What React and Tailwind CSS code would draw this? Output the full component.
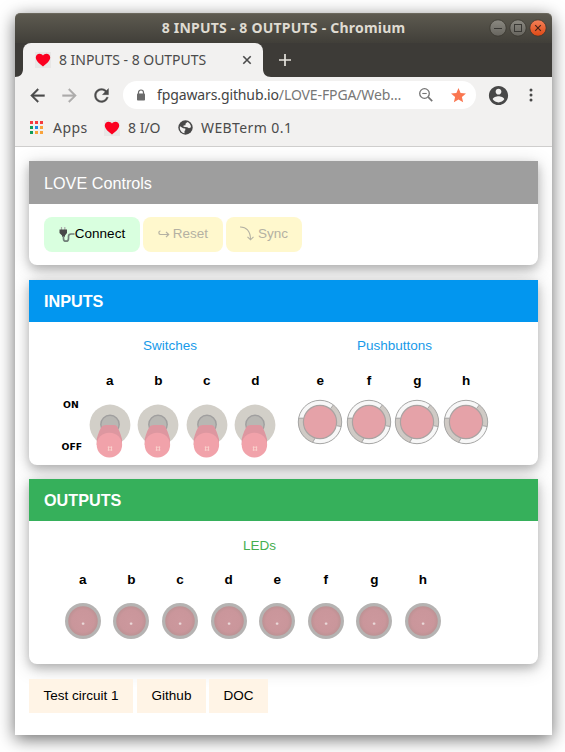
import React from "react";

const LETTERS = ["a", "b", "c", "d", "e", "f", "g", "h"];

function Heart() {
  return (
    <span className="block w-4 h-4 bg-[#e8e7e6] shrink-0">
      <svg viewBox="0 0 16 16" className="block w-4 h-4">
        <path d="M8 14.5C5 12 .8 9.3.8 5.6.8 3.3 2.5 1.7 4.6 1.7c1.4 0 2.700.7 3.4 1.900.700-1.200 2-1.900 3.400-1.900 2.100 0 3.800 1.600 3.800 3.900 0 3.700-4.200 6.400-7.200 8.900z" fill="#fb0020" />
      </svg>
    </span>
  );
}

function TitleBar() {
  return (
    <div className="relative h-[30px] shrink-0 rounded-t-[5px] bg-linear-to-b from-[#5d5a50] to-[#413f39] border-t border-[#6b685d]">
      <div className="pt-[4px] text-center text-[14px] leading-[20px] font-bold text-[#dfdbd2] font-['Noto_Sans',sans-serif] whitespace-nowrap">
        <span className="tracking-[0.22px]">8 INPUTS - 8 OUTPUTS - Chromium</span>
      </div>
      <svg className="absolute right-[5px] top-[5px]" width="58" height="18" viewBox="0 0 58 18">
        <defs>
          <linearGradient id="grey" x1="0" y1="0" x2="0" y2="1">
            <stop offset="0" stopColor="#8b8981" />
            <stop offset="1" stopColor="#66645e" />
          </linearGradient>
          <linearGradient id="orange" x1="0" y1="0" x2="0" y2="1">
            <stop offset="0" stopColor="#f58159" />
            <stop offset="1" stopColor="#dd4814" />
          </linearGradient>
        </defs>
        <circle cx="9" cy="9" r="8.200" fill="url(#grey)" stroke="#38362f" strokeWidth=".8" />
        <path d="M5 9.500h8" stroke="#3a3935" />
        <circle cx="29" cy="9" r="8.200" fill="url(#grey)" stroke="#38362f" strokeWidth=".8" />
        <rect x="25.500" y="5.500" width="7" height="7" fill="none" stroke="#3a3935" />
        <circle cx="49" cy="9" r="8.200" fill="url(#orange)" stroke="#38362f" strokeWidth=".8" />
        <path d="M46.200 6.200l5.600 5.600M51.800 6.200l-5.600 5.600" stroke="#4a2418" strokeWidth="1.200" />
      </svg>
    </div>
  );
}

function TabBar() {
  return (
    <div className="flex h-[34px] shrink-0 bg-[#3d3b37]">
      <svg width="8" height="34" className="shrink-0">
        <path d="M8 26v8H0c5 0 8-3 8-8z" fill="#f2f1f0" />
      </svg>
      <div className="flex items-center w-[240px] rounded-t-[8px] bg-[#f2f1f0] pl-3 pr-[11px]">
        <Heart />
        <span className="ml-2 w-[160px] -mt-[2px] whitespace-nowrap text-[14px] tracking-[-0.03px] text-[#4b4b4b] font-['Noto_Sans',sans-serif]">8 INPUTS - 8 OUTPUTS</span>
        <svg className="ml-auto" width="10" height="10" viewBox="0 0 10 10">
          <path d="M1.300 1.300l7.400 7.400M8.700 1.300L1.300 8.700" stroke="#4b4b4b" strokeWidth="1.600" />
        </svg>
      </div>
      <svg width="8" height="34" className="shrink-0">
        <path d="M0 26v8h8c-5 0-8-3-8-8z" fill="#f2f1f0" />
      </svg>
      <svg className="ml-2 mt-[11px]" width="12" height="12" viewBox="0 0 12 12">
        <path d="M6 0v12M0 6h12" stroke="#e6e4dd" strokeWidth="1.700" />
      </svg>
    </div>
  );
}

function Toolbar() {
  return (
    <div className="flex items-center h-9 shrink-0 pl-[11.5px] bg-[#f2f1f0]">
      <svg className="shrink-0" width="21" height="21" viewBox="0 0 24 24" fill="#4b4b4b" stroke="#4b4b4b" strokeWidth=".4">
        <path d="M20 11H7.830l5.590-5.590L12 4l-8 8 8 8 1.410-1.410L7.830 13H20v-2z" />
      </svg>
      <svg className="ml-[11px] shrink-0" width="21" height="21" viewBox="0 0 24 24" fill="#adacab" stroke="#adacab" strokeWidth=".4">
        <path d="M12 4l-1.410 1.410L16.170 11H4v2h12.170l-5.580 5.590L12 20l8-8z" />
      </svg>
      <svg className="ml-[11px] shrink-0" width="21" height="21" viewBox="0 0 24 24" fill="#4b4b4b" stroke="#4b4b4b" strokeWidth=".4">
        <path d="M17.650 6.350C16.200 4.900 14.210 4 12 4c-4.420 0-7.990 3.580-7.990 8s3.570 8 7.990 8c3.730 0 6.840-2.550 7.730-6h-2.080c-.82 2.330-3.040 4-5.650 4-3.310 0-6-2.690-6-6s2.690-6 6-6c1.660 0 3.140.69 4.220 1.780L13 11h7V4l-2.350 2.350z" />
      </svg>
      <div className="flex items-center ml-[11.5px] w-[353px] h-7 rounded-full bg-white pl-[13px]">
        <svg width="10" height="12" viewBox="0 0 10 12" className="shrink-0">
          <path d="M2.500 5V3.500a2.500 2.500 0 015 0V5" fill="none" stroke="#6b6b6b" strokeWidth="1.200" />
          <rect x="1" y="4.500" width="8" height="7" rx=".8" fill="#6b6b6b" />
        </svg>
        <span className="ml-[11px] w-[246px] -mt-[1px] whitespace-nowrap text-[14px] tracking-[-0.12px] text-[#777] font-['Noto_Sans',sans-serif]">
          <span className="text-[#444]">fpgawars.github.io</span>/LOVE-FPGA/Web…
        </span>
        <svg className="ml-[15px] shrink-0" width="16" height="16" viewBox="0 0 16 16" fill="none" stroke="#747474" strokeWidth="1.300">
          <circle cx="6.500" cy="6.500" r="4.800" />
          <path d="M10.200 10.200l4 4" strokeWidth="1.700" />
          <path d="M4.300 6.500h4.400" strokeWidth="1.100" />
        </svg>
        <svg className="ml-[16.5px] shrink-0" width="15" height="15" viewBox="2 2 20 20" fill="#fa7650">
          <path d="M12 17.270L18.180 21l-1.640-7.030L22 9.240l-7.190-.61L12 2 9.190 8.630 2 9.240l5.460 4.730L5.820 21z" />
        </svg>
      </div>
      <svg className="ml-[11px] shrink-0" width="23" height="23" viewBox="0 0 24 24" fill="#484848">
        <path d="M12 2C6.480 2 2 6.480 2 12s4.480 10 10 10 10-4.480 10-10S17.520 2 12 2zm0 3c1.660 0 3 1.340 3 3s-1.340 3-3 3-3-1.340-3-3 1.340-3 3-3zm0 14.200c-2.500 0-4.710-1.280-6-3.220.03-1.990 4-3.080 6-3.080 1.990 0 5.970 1.090 6 3.080-1.290 1.940-3.500 3.220-6 3.220z" />
      </svg>
      <svg className="ml-[18.5px] shrink-0" width="4" height="14" viewBox="0 0 4 14" fill="#484848">
        <circle cx="2" cy="2" r="1.500" />
        <circle cx="2" cy="7" r="1.500" />
        <circle cx="2" cy="12" r="1.500" />
      </svg>
    </div>
  );
}

const APP_COLORS = ["#f53b3f", "#f53b3f", "#f53b3f", "#0f9d58", "#1e88e5", "#f9a33c", "#0f9d58", "#f9a33c", "#f9a33c"];

function Bookmarks() {
  return (
    <div className="flex items-center h-[34px] pb-[4px] shrink-0 pl-[15px] bg-[#f2f1f0] border-b border-[#cfcecd] text-[14px] text-[#4b4b4b] font-['Noto_Sans',sans-serif] whitespace-nowrap">
      <svg width="13" height="13" viewBox="0 0 13 13" className="shrink-0">
        {APP_COLORS.map((c, i) => (
          <rect key={i} x={(i % 3) * 5} y={Math.floor(i / 3) * 5} width="3" height="3" fill={c} />
        ))}
      </svg>
      <span className="ml-[10px] w-[35px] tracking-[0.45px]">Apps</span>
      <span className="ml-[16px]"><Heart /></span>
      <span className="ml-[8px] w-[33px]">8 I/O</span>
      <svg className="ml-[16.5px] shrink-0" width="15" height="15" viewBox="0 0 15 15">
        <circle cx="7.500" cy="7.500" r="7.200" fill="#484848" />
        <path d="M2 6.200L5.200 8.200 7.300 8.600V10.200L6.500 11V13.300C4 13 1.800 10.500 1.800 7.500z" fill="#f2f1f0" />
        <path d="M5.500 6.800V5.600L7.500 5.200V3.800L9.300 2.100C11.500 2.800 13 5 13 7.200L11 8.300 9.300 7.300z" fill="#f2f1f0" />
      </svg>
      <span className="ml-[8.5px] tracking-[0.4px]">WEBTerm 0.1</span>
    </div>
  );
}

function Switch() {
  return (
    <svg className="block mx-auto" width="44" height="58" viewBox="-22 -22 44 58">
      <circle cx="0" cy="0" r="20.400" fill="#d2cfc8" />
      <circle cx="0" cy="-.5" r="9.200" fill="#b8b7b3" stroke="#a09f9f" strokeWidth="1.400" />
      <path d="M-6.500 .5Q-5.500 0-4 0H4Q5.800 0 7 1.200 9.500 5 12 14V20H-13.300V14Q-11 5-8 1.200z" fill="#dd97a0" />
      <rect x="-13.300" y="7.700" width="25.400" height="24.800" rx="12.400" fill="#f1a2aa" />
      <path d="M-2.300 22.200h4.600M-2.300 25h4.600M-1.500 21.400v4.400M1.500 21.400v4.400" stroke="#f9d0cc" strokeWidth=".9" />
    </svg>
  );
}

function PushButton() {
  return (
    <svg className="block mx-auto" width="46" height="46" viewBox="-23 -23 46 46">
      <circle r="21.700" fill="#f7f7f7" />
      <path d="M13.400-17.100A21.700 21.700 0 0121.200 4.500L16.600 3.500 10.500-13.400z" fill="#cfcac5" />
      <path d="M-21.600-3.800A21.700 21.700 0 00-7.400 20.400L-5 16-16.500-3.800z" fill="#cfcac5" />
      <path d="M13.400-17.100L10.500-13.400M21.200 4.500L16.600 3.700M-7.400 20.400L-4.800 16M-21.600-3.800h5.200" stroke="#a4a3a2" />
      <circle r="21.700" fill="none" stroke="#a6a6a5" strokeWidth="1" />
      <circle r="16.600" fill="#e5a2a8" stroke="#aaa3a2" strokeWidth="1.200" />
    </svg>
  );
}

function Led() {
  return (
    <svg className="block mx-auto" width="38" height="38" viewBox="-19 -19 38 38">
      <defs>
        <radialGradient id="led">
          <stop offset="0" stopColor="#cc989d" />
          <stop offset=".75" stopColor="#ca969b" />
          <stop offset="1" stopColor="#bd9294" />
        </radialGradient>
      </defs>
      <circle r="18" fill="#b5b3b2" />
      <circle r="14.800" fill="url(#led)" />
      <rect x="-1.200" y="1.500" width="2.600" height="2.200" rx=".8" fill="#ead8d8" />
    </svg>
  );
}

function Row({ letters, part: Part, top }) {
  return (
    <div className="flex">
      {letters.map((l) => (
        <div key={l} className="w-[48.6px] shrink-0">
          <div className={"text-center font-bold text-[13.5px] leading-5 " + top}>{l}</div>
          <Part />
        </div>
      ))}
    </div>
  );
}

const CARD = "rounded-b-[8px] bg-white shrink-0 shadow-[0_4px_10px_rgba(0,0,0,0.2),0_4px_20px_rgba(0,0,0,0.19)] ";
const BUTTON = "flex items-center justify-center h-[35px] rounded-[8px] pb-[1px] whitespace-nowrap ";

export default function App() {
  return (
    <div className="w-[565px] h-[752px] bg-white overflow-hidden pt-[13px] pl-[15px] font-['Liberation_Sans',sans-serif]">
      <div className="flex flex-col w-[537px] h-[722px] rounded-t-[5px] bg-white shadow-[0_4px_17px_rgba(0,0,0,0.58)]">
        <TitleBar />
        <TabBar />
        <div className="h-[70px] shrink-0 bg-[#f2f1f0]">
          <Toolbar />
          <Bookmarks />
        </div>
        <main className="flex flex-col flex-1 px-[14px] pt-[14px] overflow-hidden text-[13.5px] leading-5 text-black">
          <section className={CARD + "h-[104px]"}>
            <h2 className="h-[43px] pl-[15px] pt-[10px] bg-[#9e9e9e] text-white text-[16.2px] leading-6">LOVE Controls</h2>
            <div className="flex pl-[15px] pt-[13px]">
              <button className={BUTTON + "w-[96px] bg-[#d9ffdf]"}>
                <svg width="16" height="17" viewBox="0 0 16 17" className="shrink-0">
                  <path d="M2.500 1v3M5.800 1v3" stroke="#aaa" strokeWidth="1.200" />
                  <path d="M.5 3.500h7.500V7L6 9.500v1.300H3V9.500L.5 7z" fill="#484848" />
                  <path d="M4.500 10v2.700q0 2.500 2.500 2.500t2.500-2.800V10.500q0-2.500 2.500-2.500h3.500" fill="none" stroke="#72807a" strokeWidth="1.700" />
                </svg>
                Connect
              </button>
              <button className={BUTTON + "ml-[3px] w-[80px] bg-[#fff8cd] text-[#b4b1a3]"}>
                <svg width="12" height="10" viewBox="0 0 12 10" className="mr-[3px]" fill="none" stroke="#b4b1a3" strokeWidth="1.200">
                  <path d="M2.500 2C.3 2 .3 5.500 2.500 5.500H10.500M8 2.800L10.700 5.500 8 8.200" />
                </svg>
                Reset
              </button>
              <button className={BUTTON + "ml-[3px] w-[76px] bg-[#fff8cd] text-[#b4b1a3]"}>
                <svg width="14" height="15" viewBox="0 0 14 15" className="mr-[4px] -mt-[1px]" fill="none" stroke="#b4b1a3" strokeWidth="1.100">
                  <path d="M0 1C6 .8 10.500 4.500 10.500 13.500M7.500 10.800l3 3 3-3" />
                </svg>
                Sync
              </button>
            </div>
          </section>

          <section className={CARD + "mt-[15px] h-[185px]"}>
            <h2 className="h-[42px] pl-[15px] pt-[9px] bg-[#0296ef] text-white font-bold text-[16.2px] leading-6">INPUTS</h2>
            <div className="flex pt-[14px]">
              <div className="w-[56.4px] shrink-0 pt-[60px] text-[9.3px] leading-[18px] font-bold text-black font-['DejaVu_Sans',sans-serif]">
                <div className="pl-[34px]">ON</div>
                <div className="pl-[32.5px] mt-[24px]">OFF</div>
              </div>
              <div className="w-[194.6px] shrink-0">
                <h3 className="pl-[57.6px] text-[#179ae9]">Switches</h3>
                <div className="pt-[15px]">
                  <Row letters={LETTERS.slice(0, 4)} part={Switch} top="mb-[12px]" />
                </div>
              </div>
              <div className="ml-[16px] w-[195px] shrink-0">
                <h3 className="pl-[61px] text-[#179ae9]">Pushbuttons</h3>
                <div className="pt-[15px]">
                  <Row letters={LETTERS.slice(4)} part={PushButton} top="mb-[8px]" />
                </div>
              </div>
            </div>
          </section>

          <section className={CARD + "mt-[14px] h-[185px]"}>
            <h2 className="h-[42px] pl-[15px] pt-[9px] bg-[#36b05b] text-white font-bold text-[16.2px] leading-6">OUTPUTS</h2>
            <h3 className="pl-[214px] pt-[15px] text-[#45ae4f]">LEDs</h3>
            <div className="pl-[29.500px] pt-[14px]">
              <Row letters={LETTERS} part={Led} top="mb-[12px]" />
            </div>
          </section>

          <nav className="flex mt-[15px]">
            <a className="flex justify-center w-[104px] h-[34px] pt-[7px] bg-[#fff4e6]">Test circuit 1</a>
            <a className="flex justify-center ml-[4px] w-[69px] h-[34px] pt-[7px] bg-[#fff4e6]">Github</a>
            <a className="flex justify-center ml-[3px] w-[59px] h-[34px] pt-[7px] bg-[#fff4e6]">DOC</a>
          </nav>
        </main>
      </div>
    </div>
  );
}
